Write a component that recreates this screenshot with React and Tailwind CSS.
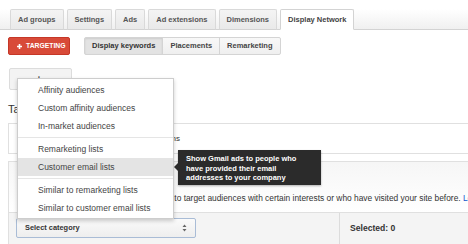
const TABS = [
  { label: 'Ad groups' },
  { label: 'Settings' },
  { label: 'Ads' },
  { label: 'Ad extensions' },
  { label: 'Dimensions' },
  { label: 'Display Network', active: true },
]

const SUBTABS = [
  { label: 'Display keywords', active: true },
  { label: 'Placements' },
  { label: 'Remarketing' },
]

// null = divider line between groups
const MENU = [
  'Affinity audiences',
  'Custom affinity audiences',
  'In-market audiences',
  null,
  'Remarketing lists',
  'Customer email lists',
  null,
  'Similar to remarketing lists',
  'Similar to customer email lists',
]

function Tabs() {
  return (
    <div className="pt-[9px]">
      <div className="flex gap-[3px] pl-[10px] border-b border-[#d3d3d3] bg-linear-to-b from-white to-[#f0f0f0]">
        {TABS.map(t => (
          <div
            key={t.label}
            className={
              t.active
                ? 'h-[21px] -mb-px flex items-center px-[7px] border border-[#d3d3d3] border-b-white bg-white rounded-t-[2px] text-[7.5px] font-bold text-[#444]'
                : 'h-[21px] -mb-px flex items-center px-[7px] border border-[#d9d9d9] border-b-[#d3d3d3] bg-linear-to-b from-[#f4f4f4] to-[#e9e9e9] rounded-t-[2px] text-[7.5px] font-bold text-[#555]'
            }
          >
            {t.label}
          </div>
        ))}
      </div>
    </div>
  )
}

function Toolbar() {
  return (
    <div className="mt-[7px] flex items-center pl-[8px]">
      <div className="h-[18px] w-[62px] flex items-center gap-[4px] pl-[8px] bg-[#d84a38] border border-[#c53727] rounded-[2px] text-white text-[6.8px] font-bold">
        <svg width="5" height="5" viewBox="0 0 5 5">
          <path d="M2.5 0v5M0 2.5h5" stroke="#fff" strokeWidth="1.6" />
        </svg>
        TARGETING
      </div>
      <div className="ml-[14px] flex">
        {SUBTABS.map((s, i) => (
          <div
            key={s.label}
            className={
              (s.active
                ? 'bg-[#e3e3e3] shadow-[inset_0_1px_2px_rgba(0,0,0,0.1)] text-[#333] '
                : 'bg-linear-to-b from-[#f8f8f8] to-[#efefef] text-[#444] ') +
              (i === 0 ? 'rounded-l-[2px] ' : '-ml-px ') +
              (i === SUBTABS.length - 1 ? 'rounded-r-[2px] ' : '') +
              'h-[18px] flex items-center px-[7px] border border-[#d4d4d4] text-[7.5px] font-bold'
            }
          >
            {s.label}
          </div>
        ))}
      </div>
    </div>
  )
}

function Menu() {
  return (
    <div className="absolute left-[17px] top-[78px] w-[157px] bg-white border border-[#cdcdcd] shadow-[0_2px_4px_rgba(0,0,0,0.2)] pt-[2px] pb-[1px]">
      {MENU.map((item, i) =>
        item === null ? (
          <div key={i} className="my-[2px] h-px bg-[#e5e5e5]" />
        ) : (
          <div
            key={item}
            className={
              (item === 'Customer email lists' ? 'bg-[#e4e4e4] ' : '') +
              'h-[18px] flex items-center pl-[20px] text-[8.5px] text-[#444]'
            }
          >
            {item}
          </div>
        )
      )}
    </div>
  )
}

function Tooltip() {
  return (
    <div className="absolute left-[178px] top-[150px] w-[143px] h-[35px] bg-[#2b2b2b] px-[8px] pt-[4px] text-white text-[7.5px] font-bold leading-[9.5px] shadow-[0_1px_2px_rgba(0,0,0,0.3)]">
      <span className="absolute left-[-4px] top-[13px] w-0 h-0 border-y-[4px] border-y-transparent border-r-[4px] border-r-[#2b2b2b]" />
      Show Gmail ads to people who
      <br />
      have provided their email
      <br />
      addresses to your company
    </div>
  )
}

export default function App() {
  return (
    <div className="relative w-[468px] h-[244px] overflow-hidden bg-white font-['Liberation_Sans',Arial,sans-serif]">
      <Tabs />
      <Toolbar />

      <div className="mt-[13px] ml-[9px] w-[63px] h-[22px] pl-[26px] flex items-center border border-[#dcdcdc] bg-[#f3f3f3] rounded-[2px] text-[10px] font-bold text-[#444]">
        +
      </div>

      <div className="mt-[13px] ml-[8px] text-[11px] leading-[13px] text-[#333]">Targeting</div>

      <div className="mt-[7px] ml-[8px] w-[480px] h-[31px] flex items-center border border-[#e0e0e0] bg-white text-[8px] text-[#333]">
        <span className="w-[171px] shrink-0 whitespace-nowrap text-right">Interests &amp; remarketing options</span>
      </div>

      <div className="mt-[7px] ml-[8px] w-[480px] border border-[#e0e0e0]">
        <div className="h-[50px] pt-[31px] bg-linear-to-b from-[#f6f6f6] to-white whitespace-nowrap text-[8.4px] leading-[10px] text-[#333]">
          <span className="inline-block w-[163px] text-right">Use interests and remarketing</span>{' '}
          to target audiences with certain interests or who have visited your site before.{' '}
          <span className="text-[#1155cc]">Learn more</span>
        </div>
        <div className="flex h-[40px] border-t border-[#e0e0e0] bg-[#f4f4f4]">
          <div className="w-[331px] shrink-0 border-r border-[#dcdcdc] pt-[5px] pl-[7px]">
            <div className="w-[180px] h-[20px] flex items-center justify-between pl-[8px] pr-[8px] border border-[#a9bcd6] rounded-[2px] bg-linear-to-b from-[#fafafa] to-[#eeeeee] text-[7.4px] font-bold text-[#333]">
              Select category
              <svg width="5" height="8" viewBox="0 0 5 8">
                <path d="M2.5 0.5L4.5 3H0.5Z M2.5 7.5L4.5 5H0.5Z" fill="#666" />
              </svg>
            </div>
          </div>
          <div className="pl-[10px] pt-[5px] h-full">
            <div className="h-[20px] flex items-center text-[8.6px] font-bold text-[#333]">Selected: 0</div>
          </div>
        </div>
      </div>

      <Menu />
      <Tooltip />
    </div>
  )
}
